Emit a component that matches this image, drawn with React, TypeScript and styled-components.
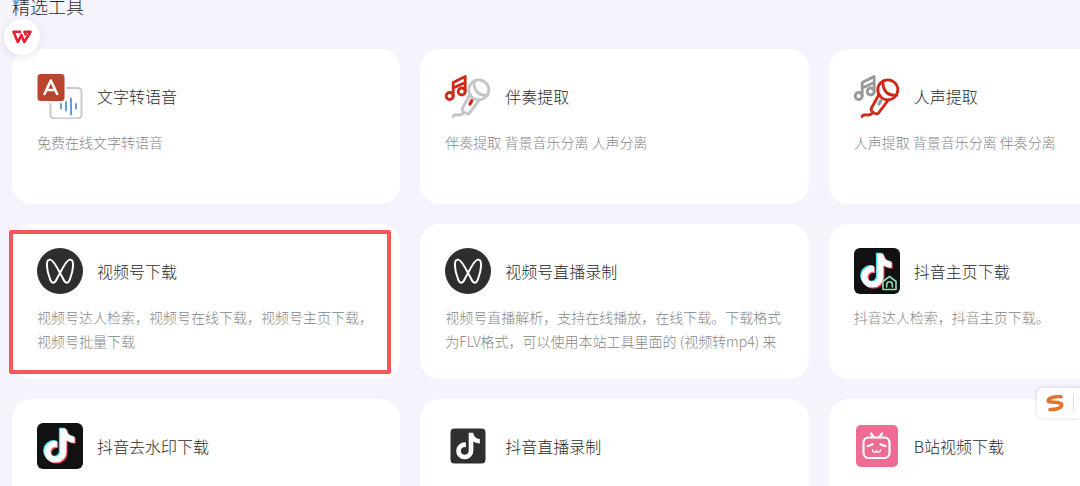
import React from "react";
import styled, { createGlobalStyle } from "styled-components";
import { FaTiktok } from "react-icons/fa6";

const GlobalStyle = createGlobalStyle`
  * { box-sizing: border-box; }
  body {
    margin: 0;
    background: #f5f4fd;
    font-family: "Noto Sans CJK SC", "Noto Sans", sans-serif;
    font-weight: 300;
    color: #2a2a2a;
  }
`;

const Page = styled.main`
  position: relative;
  height: 100vh;
  overflow: hidden;
  padding-left: 12px;
`;

const SectionTitle = styled.h2`
  margin: 0 0 37px;
  font-size: 18px;
  line-height: 12px;
  font-weight: 300;
`;

const ToolGrid = styled.section`
  display: grid;
  grid-template-columns: repeat(3, minmax(0, 1fr));
  gap: 20px;
  margin-right: -137px;
`;

const ToolCard = styled.a`
  position: relative;
  display: flex;
  flex-direction: column;
  gap: 11px;
  padding: 24px 25px 26px;
  border-radius: 20px;
  background: #fff;
  color: inherit;
  text-decoration: none;
`;

const CardHead = styled.div`
  display: flex;
  align-items: center;
  gap: 14px;
`;

const IconBox = styled.svg`
  flex: none;
  width: 46px;
  height: 46px;
`;

const CardTitle = styled.h3`
  margin: 0;
  font-size: 16px;
  line-height: 24px;
  font-weight: 300;
`;

const CardText = styled.p`
  margin: 0;
  height: 48px;
  overflow: hidden;
  font-size: 14px;
  line-height: 24px;
  color: #858585;
`;

const Highlight = styled.span`
  position: absolute;
  top: 6px;
  right: 9px;
  bottom: 5px;
  left: -3px;
  border: 4px solid #f25858;
  border-radius: 2px;
  pointer-events: none;
`;

const WpsButton = styled.button`
  position: absolute;
  top: 19px;
  left: 4px;
  z-index: 1;
  display: grid;
  place-items: center;
  width: 36px;
  height: 36px;
  padding: 0;
  border: 0;
  border-radius: 50%;
  background: #fff;
  box-shadow: 0 2px 8px rgba(60, 60, 90, 0.12);
`;

const InputBar = styled.button`
  position: absolute;
  top: 388px;
  right: 0;
  z-index: 1;
  display: flex;
  align-items: center;
  gap: 8px;
  width: 43px;
  height: 30px;
  padding: 0 0 0 8px;
  border: 0;
  border-radius: 6px 0 0 6px;
  background: #fff;
  box-shadow: 0 0 4px rgba(60, 60, 90, 0.2);
`;

const Divider = styled.span`
  width: 1px;
  height: 18px;
  background: #ddd;
`;

const SpeechIcon = () => (
  <IconBox viewBox="0 0 46 46" fill="none" strokeLinecap="round" aria-hidden="true">
    <rect x="13.5" y="15" width="31" height="30.5" rx="4" stroke="#c9c9c9" strokeWidth="2" />
    <rect x="-1" y="0" width="30" height="30" rx="5" fill="#fff" />
    <rect x="0.5" y="1" width="27" height="27" rx="3.5" fill="#b8452c" />
    <path d="M7.5 21 13.8 7.5 20.2 21M9.7 17H18" stroke="#fff" strokeWidth="2.6" strokeLinejoin="round" />
    <path d="M24 31v4.500M29 29v8.500M34 25.500v16M39 31v4.500" stroke="#5b90cf" strokeWidth="1.8" />
  </IconBox>
);

const MicIcon = ({ note, mic, knob }: { note: string; mic: string; knob: string }) => (
  <IconBox viewBox="0.5 -0.5 46 46" fill="none" strokeLinecap="round" strokeLinejoin="round" strokeWidth="2.8" aria-hidden="true">
    <g stroke={note}>
      <circle cx="5.2" cy="22.5" r="3.5" />
      <circle cx="17.2" cy="18" r="3.5" />
      <path d="M8.700 22.5V9L20.700 3v15M8.700 14.5l12-5.5" />
    </g>
    <g stroke={mic}>
      <circle cx="34.3" cy="16.3" r="10" />
      <path d="M29.5 8c-.5 9.500 5 15 14 13.500" />
      <path d="M25.500 21 18 34.500c-1 2 0 3.200 1.500 4.200l2 1.200c1.500.9 2.800.6 3.800-.8L34.800 26.500" />
      <path d="M8.500 43c1-2.500 3-1.800 5-1.500s4-.2 6-2.500" />
    </g>
    <path d="M27.300 27.200 25.500 30.500" stroke={knob} strokeWidth="3.2" />
  </IconBox>
);

const ChannelsIcon = () => (
  <IconBox viewBox="0 0 46 46" fill="none" aria-hidden="true">
    <circle cx="23" cy="23" r="23" fill="#2e2e2e" />
    <path
      d="M23 25C19 17 15.500 11 12.500 11.500 8.500 12 9.500 22 13 31c2 5.500 4.500 4.500 6.500.5C21 28.500 22 26.500 23 25c4-8 7.500-14 10.500-13.500C37.500 12 36.500 22 33 31c-2 5.500-4.500 4.500-6.500.5C25 28.500 24 27 23 25Z"
      stroke="#fff"
      strokeWidth="2"
    />
  </IconBox>
);

const DouyinIcon = ({ home }: { home?: boolean }) => (
  <IconBox viewBox="0 0 46 46" fill="none" aria-hidden="true">
    <rect width="46" height="46" rx="6" fill="#111" />
    <FaTiktok x="4" y="4.500" size={34} color="#2fe3e6" />
    <FaTiktok x="6.800" y="6.800" size={34} color="#f5455c" />
    <FaTiktok x="5.400" y="5.600" size={34} color="#fff" stroke="#fff" strokeWidth="8" />
    {home && (
      <g stroke="#8fdcb8" strokeWidth="1.600" strokeLinejoin="round">
        <path d="M29 33.500 35.500 28.500 42 33.500V41.500H29Z" fill="#111" />
        <path d="M32.700 39v-2.500a2.800 2.800 0 0 1 5.600 0V39" strokeLinecap="round" />
      </g>
    )}
  </IconBox>
);

const DouyinLiveIcon = () => (
  <IconBox viewBox="0 0 46 46" fill="none" aria-hidden="true">
    <rect x="5.500" y="5.500" width="35" height="35" rx="4" fill="#2f2f2f" />
    <FaTiktok x="9.500" y="9.500" size={27} color="#fff" />
  </IconBox>
);

const BilibiliIcon = () => (
  <IconBox viewBox="0 0 46 46" fill="none" strokeLinecap="round" strokeLinejoin="round" aria-hidden="true">
    <rect x="2" y="2" width="42" height="42" rx="5" fill="#ee6c93" />
    <g stroke="#fff">
      <rect x="9.500" y="14.500" width="26" height="20.500" rx="5" strokeWidth="2.200" />
      <path d="m17 10.500 2.500 3.500M28 10.500 25.500 14" strokeWidth="2.200" />
      <path d="m13.500 23.300 5.200-2M31.500 23.300l-5.200-2" strokeWidth="2" />
      <path d="M18.500 27c.3 3 3.500 3 4 .5.500 2.500 3.700 2.500 4-.5" strokeWidth="1.400" />
    </g>
  </IconBox>
);

const WpsLogo = () => (
  <svg width="20" height="14" viewBox="0 0 20 14" fill="none" stroke="#e5202e" strokeWidth="2.600" strokeLinejoin="round" aria-hidden="true">
    <path d="M9 1.800H1.500L5.800 12 9.800 5" />
    <path d="M8.800 4 12.300 12 18.500 1.800H12.500L14 5.500" />
  </svg>
);

const SogouLogo = () => (
  <svg width="20" height="18" viewBox="0 0 20 18" fill="none" stroke="#e8742a" strokeWidth="3.600" strokeLinecap="round" aria-hidden="true">
    <path d="M16 2.800C11.500 2 4 3.500 3.200 6.500 2.600 9.500 17.300 7 16.700 11 16 14.800 9.500 15.800 5 15.500" />
  </svg>
);

const tools = [
  { title: "文字转语音", text: "免费在线文字转语音", icon: <SpeechIcon /> },
  {
    title: "伴奏提取",
    text: "伴奏提取 背景音乐分离 人声分离",
    icon: <MicIcon note="#d02818" mic="#c4c4c4" knob="#d02818" />,
  },
  {
    title: "人声提取",
    text: "人声提取 背景音乐分离 伴奏分离",
    icon: <MicIcon note="#999" mic="#d02818" knob="#999" />,
  },
  {
    title: "视频号下载",
    text: "视频号达人检索，视频号在线下载，视频号主页下载，视频号批量下载",
    icon: <ChannelsIcon />,
    highlighted: true,
  },
  {
    title: "视频号直播录制",
    text: "视频号直播解析，支持在线播放，在线下载。下载格式为FLV格式，可以使用本站工具里面的 (视频转mp4) 来",
    icon: <ChannelsIcon />,
  },
  { title: "抖音主页下载", text: "抖音达人检索，抖音主页下载。", icon: <DouyinIcon home /> },
  { title: "抖音去水印下载", text: "抖音视频下载，抖音去水印下载，在线解析", icon: <DouyinIcon /> },
  { title: "抖音直播录制", text: "抖音直播解析，支持在线播放，在线下载", icon: <DouyinLiveIcon /> },
  { title: "B站视频下载", text: "B站视频解析，在线下载", icon: <BilibiliIcon /> },
];

export default function App() {
  return (
    <>
      <GlobalStyle />
      <Page lang="zh-CN">
        <SectionTitle>精选工具</SectionTitle>
        <ToolGrid>
          {tools.map((tool) => (
            <ToolCard href="#" key={tool.title}>
              <CardHead>
                {tool.icon}
                <CardTitle>{tool.title}</CardTitle>
              </CardHead>
              <CardText>{tool.text}</CardText>
              {tool.highlighted && <Highlight />}
            </ToolCard>
          ))}
        </ToolGrid>
        <WpsButton aria-label="WPS">
          <WpsLogo />
        </WpsButton>
        <InputBar aria-label="输入法">
          <SogouLogo />
          <Divider />
        </InputBar>
      </Page>
    </>
  );
}
